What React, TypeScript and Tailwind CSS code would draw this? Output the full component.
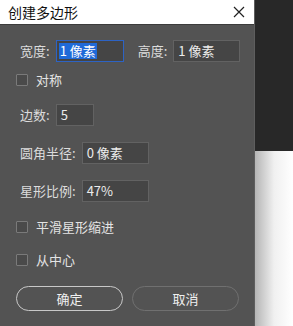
import React from "react";

const font = { fontFamily: '"Noto Sans CJK SC", "Liberation Sans", sans-serif' };

const Field: React.FC<{ label: string; value: string; width: string }> = ({ label, value, width }) => (
  <div className="flex items-center h-[22px]">
    <span className="text-[13px] text-[#dcdcdc] pl-1">{label}</span>
    <div className={`ml-[6px] h-[22px] ${width} bg-[#454545] border border-[#626262] flex items-center pl-[4px] text-[13px] text-[#ececec]`}>
      {value}
    </div>
  </div>
);

const Check: React.FC<{ label: string }> = ({ label }) => (
  <div className="flex items-center h-[18px]">
    <div className="w-[12px] h-[12px] border border-[#7a7a7a] bg-[#4a4a4a] rounded-[1px]" />
    <span className="ml-[8px] text-[13px] text-[#e4e4e4]">{label}</span>
  </div>
);

export default function App() {
  return (
    <div className="flex w-[293px] h-[326px] overflow-hidden" style={font}>
      <div className="w-[255px] h-full flex flex-col bg-[#535353] border-r border-[#5e5e5e]">
        <div className="h-[25px] bg-white flex items-center justify-between pl-[8px] pr-[9px] border-b border-[#3c3c3c]">
          <span className="text-[14px] text-[#111]">创建多边形</span>
          <svg width="12" height="12" viewBox="0 0 12 12">
            <path d="M1 1L11 11M11 1L1 11" stroke="#222" strokeWidth="1.2" />
          </svg>
        </div>
        <div className="flex flex-col pl-[16px]">
          <div className="mt-[15px] flex items-center h-[22px]">
            <span className="text-[13px] text-[#dcdcdc] pl-1">宽度:</span>
            <div className="ml-[6px] h-[22px] w-[68px] bg-[#454545] border border-[#2d63c4] flex items-center pl-[2px]">
              <span className="bg-[#1f6ad8] text-white text-[13px] leading-[16px] px-[1px]">1 像素</span>
            </div>
            <span className="ml-[14px] text-[13px] text-[#dcdcdc]">高度:</span>
            <div className="ml-[6px] h-[22px] w-[67px] bg-[#454545] border border-[#626262] flex items-center pl-[4px] text-[13px] text-[#ececec]">
              1 像素
            </div>
          </div>
          <div className="mt-[9px]">
            <Check label="对称" />
          </div>
          <div className="mt-[15px]">
            <Field label="边数:" value="5" width="w-[38px]" />
          </div>
          <div className="mt-[16px]">
            <Field label="圆角半径:" value="0 像素" width="w-[67px]" />
          </div>
          <div className="mt-[16px]">
            <Field label="星形比例:" value="47%" width="w-[67px]" />
          </div>
          <div className="mt-[16px]">
            <Check label="平滑星形缩进" />
          </div>
          <div className="mt-[15px]">
            <Check label="从中心" />
          </div>
          <div className="mt-[17px] flex gap-[9px]">
            <button className="w-[107px] h-[25px] rounded-full border-[1.5px] border-[#c8c8c8] text-[13px] text-[#f0f0f0]">确定</button>
            <button className="w-[107px] h-[25px] rounded-full border-[1.5px] border-[#707070] text-[13px] text-[#f0f0f0]">取消</button>
          </div>
        </div>
      </div>
      <div className="flex-1 flex flex-col">
        <div className="h-[151px] bg-[#282828]" />
        <div className="flex-1 bg-gradient-to-r from-[#b5b5b5] via-[#f0f0f0] to-white" />
      </div>
    </div>
  );
}
